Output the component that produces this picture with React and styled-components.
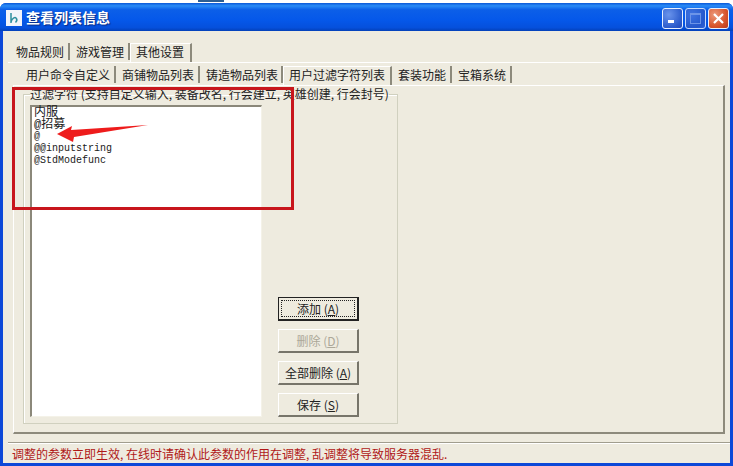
import React from "react";
import styled, { createGlobalStyle } from "styled-components";

const FACE = "#eeebdf";

const Global = createGlobalStyle`
  html, body { margin: 0; padding: 0; background: #fff; overflow: hidden; }
  body { font-family: "Liberation Sans", "Noto Sans CJK SC", sans-serif; font-size: 12px; color: #111; }
`;
const Page = styled.div`
  width: 733px; height: 466px; position: relative; overflow: hidden;
  display: flex; flex-direction: column; background: #fff;
`;
const Desktop = styled.div`
  height: 3px; flex: none; padding-left: 198px;
  &::before { content: ""; display: block; width: 26px; height: 2px; background: #2d5f93; }
`;
const Win = styled.div`
  flex: 1; display: flex; flex-direction: column; min-height: 0;
  background: #0c48d8; border-radius: 6px 6px 0 0;
`;
const TitleBar = styled.div`
  height: 28px; flex: none; display: flex; align-items: center; padding: 0 4px 0 6px; gap: 4px;
  border-radius: 6px 6px 0 0;
  background: linear-gradient(180deg, #0a58d8 0%, #2a8cf6 10%, #0c5fe8 24%, #0558ea 60%, #0550dc 88%, #0340b8 100%);
`;
const AppIcon = styled.svg` width: 16px; height: 16px; flex: none; margin-top: 1px; `;
const Title = styled.div`
  flex: 1; color: #fff; font-weight: 700; font-size: 14px; line-height: 16px;
  font-family: "Noto Sans CJK SC", sans-serif; text-shadow: 1px 1px 1px #0a2a80;
`;
const WinBtns = styled.div` display: flex; gap: 2px; margin-top: 3px; `;
const WinBtn = styled.div`
  width: 21px; height: 21px; box-sizing: border-box; border: 1px solid #e8f0ff; border-radius: 3px;
  background: ${p => p.$close
    ? "radial-gradient(circle at 30% 30%, #ec9a7c, #d8552c 60%, #b8381a)"
    : p.$dim
      ? "radial-gradient(circle at 30% 30%, #4a78e0, #2a58c8 70%, #3a68d8)"
      : "radial-gradient(circle at 30% 30%, #6a94ec, #2c5ccc 70%, #2448b8)"};
  opacity: ${p => p.$dim ? 0.85 : 1};
  display: flex; align-items: center; justify-content: center;
  svg { display: block; }
`;
const Client = styled.div`
  flex: 1; min-height: 0; margin: 0 3px 3px 3px; background: ${FACE};
  display: flex; flex-direction: column;
`;
const OuterTabsArea = styled.div`
  flex: 1; min-height: 0; display: flex; flex-direction: column; padding: 12px 0 0 5px;
`;
const TabRow = styled.div`
  display: flex; height: ${p => p.$h}px; flex: none; padding-left: ${p => p.$pl}px; align-items: flex-end;
`;
const Tab = styled.div`
  height: ${p => p.$active ? p.$h : p.$h - 2}px; box-sizing: border-box; width: ${p => p.$w}px; flex: none;
  display: flex; align-items: center; padding-left: ${p => p.$pad}px;
  padding-bottom: ${p => p.$active ? 3 : 0}px;
  font-family: "Noto Sans CJK SC", sans-serif; font-size: 12px; white-space: nowrap; color: #222;
  background: ${p => p.$active ? FACE : "transparent"};
  border-right: 2px solid #8d8a7c;
  border-top: ${p => p.$active ? "1px solid #fff" : "0"};
  border-left: ${p => p.$active ? "1px solid #fff" : "0"};
  margin-bottom: ${p => p.$active ? 0 : 2}px;
`;
const OuterPanel = styled.div`
  box-sizing: border-box; border-top: 1px solid #fff;
  display: flex; flex-direction: column; padding: 3px 0 0 5px; height: 372px; flex: none;
`;
const InnerPanel = styled.div`
  width: 712px; height: 349px; box-sizing: border-box; flex: none;
  border-top: 1px solid #fff; border-left: 1px solid #fff;
  border-right: 2px solid #8d8a7c; border-bottom: 2px solid #8d8a7c;
  padding: 2px 0 0 9px;
`;
const GroupBox = styled.fieldset`
  width: 375px; height: 336px; box-sizing: border-box; margin: 0; padding: 2px 0 0 6px;
  border: 1px solid #d0d0bf; box-shadow: inset 1px 1px 0 #fff;
  display: flex; min-width: 0;
`;
const Legend = styled.legend`
  padding: 0; margin-left: 0; font-size: 12px; line-height: 12px; color: #222;
  font-family: "Noto Sans CJK SC", sans-serif; white-space: nowrap;
`;
const GroupBody = styled.div`
  display: flex; gap: 16px; height: 312px; margin-top: 3px;
`;
const List = styled.div`
  width: 232px; height: 312px; box-sizing: border-box; background: #fff; flex: none;
  border-top: 2px solid #8b887a; border-left: 2px solid #8b887a;
  border-right: 1px solid #f4f2e8; border-bottom: 1px solid #f4f2e8;
  padding: 0 0 0 2px; color: #1a1a1a;
`;
const ListItem = styled.div`
  height: 12px; font-size: ${p => p.$cjk ? 12 : 10}px; line-height: 12px; white-space: nowrap;
  font-family: "Liberation Mono", "Noto Sans CJK SC", monospace;
`;
const ButtonCol = styled.div`
  display: flex; flex-direction: column; gap: 8px; justify-content: flex-end;
`;
const Btn = styled.div`
  width: 81px; height: 24px; box-sizing: border-box; display: flex; align-items: center; justify-content: center;
  background: ${FACE}; font-size: 12px; font-family: "Noto Sans CJK SC", sans-serif; position: relative;
  color: ${p => p.$disabled ? "#aca899" : "#222"};
  border-top: 1px solid #fff; border-left: 1px solid #fff;
  border-right: 2px solid #77756a; border-bottom: 2px solid #77756a;
  ${p => p.$focus && `
    border: 1px solid #222; border-right: 2px solid #222; border-bottom: 2px solid #222;
    &::after { content: ""; position: absolute; inset: 2px; border: 1px dotted #222; }
  `}
  u { text-decoration: underline; }
`;
const Status = styled.div`
  flex: none; height: 20px; margin-left: 5px; padding-left: 4px; display: flex; align-items: center;
  border-top: 1px solid #a09d8e; box-shadow: inset 0 1px 0 #fff;
  color: #b01818; font-size: 12px; font-family: "Noto Sans CJK SC", sans-serif; white-space: nowrap;
`;
const Annotation = styled.svg`
  position: absolute; left: 0; top: 0; width: 733px; height: 466px; pointer-events: none;
`;

export default function App() {
  return (
    <Page>
      <Global />
      <Desktop />
      <Win>
        <TitleBar>
          <AppIcon viewBox="0 0 16 16">
            <rect width="16" height="16" fill="#f2f4fa" />
            <path d="M5 3 L5 13 M5 12 C6 8 9 7 10 8 C11 9 11 11 9.5 12.5" stroke="#2f8f9f" strokeWidth="1.5" fill="none" />
          </AppIcon>
          <Title>查看列表信息</Title>
          <WinBtns>
            <WinBtn>
              <svg width="11" height="11" viewBox="0 0 11 11"><rect x="1" y="7" width="6" height="3" fill="#fff" /></svg>
            </WinBtn>
            <WinBtn $dim>
              <svg width="13" height="13" viewBox="0 0 13 13"><rect x="1.5" y="1.5" width="10" height="10" fill="none" stroke="#7f9fe8" /><rect x="1" y="1" width="11" height="2" fill="#7f9fe8" /></svg>
            </WinBtn>
            <WinBtn $close>
              <svg width="13" height="13" viewBox="0 0 13 13"><path d="M2 2 L11 11 M11 2 L2 11" stroke="#fff" strokeWidth="2.2" /></svg>
            </WinBtn>
          </WinBtns>
        </TitleBar>
        <Client>
          <OuterTabsArea>
            <TabRow $h={19} $pl={2}>
              <Tab $h={19} $w={60} $pad={6}>物品规则</Tab>
              <Tab $h={19} $w={60} $pad={6}>游戏管理</Tab>
              <Tab $h={19} $w={62} $pad={5} $active>其他设置</Tab>
            </TabRow>
            <OuterPanel>
              <TabRow $h={19} $pl={8}>
                <Tab $h={19} $w={95} $pad={5}>用户命令自定义</Tab>
                <Tab $h={19} $w={84} $pad={6}>商铺物品列表</Tab>
                <Tab $h={19} $w={83} $pad={6}>铸造物品列表</Tab>
                <Tab $h={19} $w={109} $pad={5} $active>用户过滤字符列表</Tab>
                <Tab $h={19} $w={60} $pad={6}>套装功能</Tab>
                <Tab $h={19} $w={60} $pad={6}>宝箱系统</Tab>
              </TabRow>
              <InnerPanel>
                <GroupBox>
                  <Legend>过滤字符 (支持自定义输入, 装备改名, 行会建立, 英雄创建, 行会封号)</Legend>
                  <GroupBody>
                    <List>
                      <ListItem $cjk>内服</ListItem>
                      <ListItem $cjk>@招募</ListItem>
                      <ListItem>@</ListItem>
                      <ListItem>@@inputstring</ListItem>
                      <ListItem>@StdModefunc</ListItem>
                    </List>
                    <ButtonCol>
                      <Btn $focus>添加 (<u>A</u>)</Btn>
                      <Btn $disabled>删除 (<u>D</u>)</Btn>
                      <Btn>全部删除 (<u>A</u>)</Btn>
                      <Btn>保存 (<u>S</u>)</Btn>
                    </ButtonCol>
                  </GroupBody>
                </GroupBox>
              </InnerPanel>
            </OuterPanel>
          </OuterTabsArea>
          <Status>调整的参数立即生效, 在线时请确认此参数的作用在调整, 乱调整将导致服务器混乱.</Status>
        </Client>
      </Win>
      <Annotation viewBox="0 0 733 466">
        <rect x="13.5" y="88.5" width="279" height="120" fill="none" stroke="#c8161c" strokeWidth="3" />
        <path d="M57 134 L72 126 L71 130 L148 125 L74 137 L73 142 Z" fill="#ee1c1c" />
      </Annotation>
    </Page>
  );
}
